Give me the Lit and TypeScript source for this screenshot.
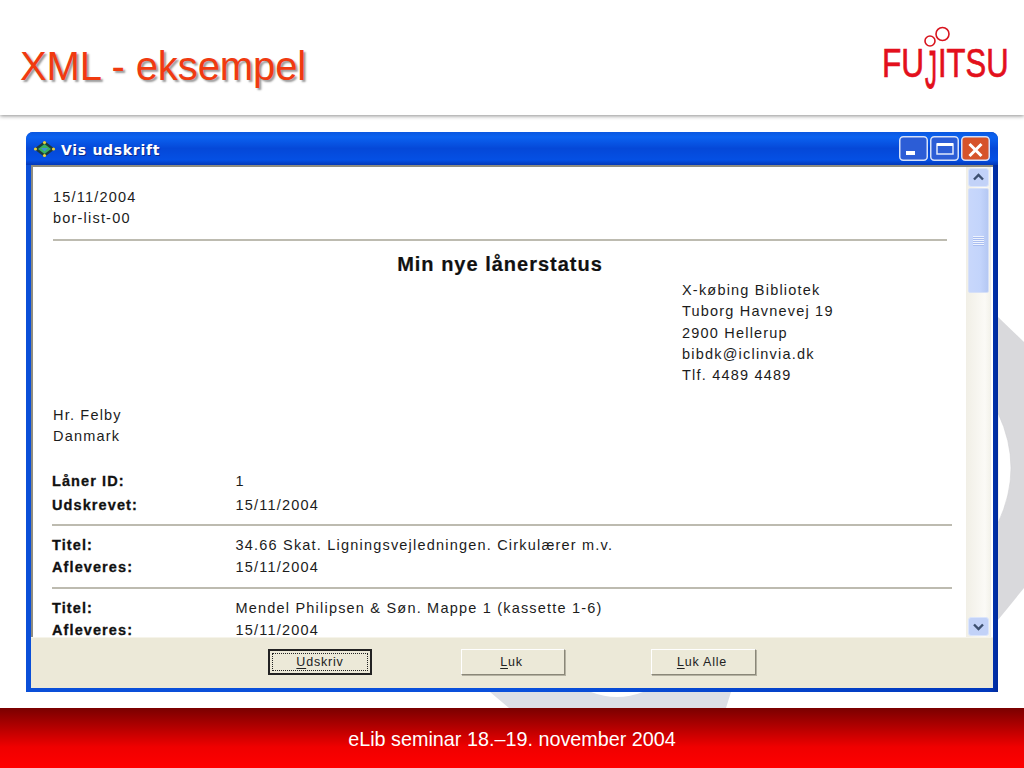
import { LitElement, html, css, svg } from "lit";
import { customElement } from "lit/decorators.js";

@customElement("app-root")
export class AppRoot extends LitElement {
  static styles = css`
    :host { display: block; width: 1024px; height: 768px; position: relative; overflow: hidden; background: #fff; font-family: "Liberation Sans", Arial, sans-serif; }
    .slide { display: flex; flex-direction: column; height: 768px; }
    .head { height: 115px; flex: none; display: flex; justify-content: space-between; align-items: flex-start; box-shadow: 0 1px 4px rgba(0,0,0,.45); background: #fff; position: relative; z-index: 2; }
    h1 { margin: 42px 0 0 20px; font-size: 40px; line-height: 48px; font-weight: 400; color: #f03a10; text-shadow: 2px 2px 2px #999; letter-spacing: -0.1px; }
    .logo { margin: 26px 13px 0 0; display: block; }
    .wm { position: absolute; left: 470px; top: 300px; z-index: 0; }
    .main { flex: 1; padding: 17px 26px 16px; position: relative; z-index: 1; min-height: 0; display: flex; }
    .win { flex: 1; display: flex; flex-direction: column; background: linear-gradient(90deg,#0a4fd8,#0a50dc 50%,#0038bc 99%,#002a9c); border-radius: 7px 7px 0 0; padding: 0 5px 4px; }
    .title { height: 33px; flex: none; display: flex; align-items: center; gap: 4px; margin: 0 -5px; padding: 0 8px 0 7px; border-radius: 7px 7px 0 0; background: linear-gradient(180deg,#0a57e0,#0b62f0 15%,#0548d8 50%,#0550e4 85%,#0338b8); color: #fff; }
    .tname { flex: 1; font-family: "DejaVu Sans", sans-serif; font-weight: 700; font-size: 14px; letter-spacing: .7px; text-shadow: 1px 1px 0 #0a2a8c; padding-top: 2px; }
    .ctl { display: flex; gap: 2px; }
    .ctl svg { display: block; }
    .client { flex: 1; display: flex; flex-direction: column; min-height: 0; background: #ece9d8; }
    .body { flex: 1; min-height: 0; display: flex; background: #fff; border-top: 2px solid #8e8c80; border-left: 2px solid #8e8c80; }
    .doc { flex: 1; overflow: hidden; padding: 19.5px 19px 0 20px; font-size: 14.5px; color: #1c1c1c; letter-spacing: 1.2px; min-width: 0; }
    .line { line-height: 21.3px; }
    .rule { height: 2px; background: #bdbbb0; }
    .r1 { margin: 10px 0; }
    .mt { text-align: center; font-weight: 700; font-size: 20px; line-height: 26px; color: #111; letter-spacing: 1px; -webkit-text-stroke: .2px #111; }
    .addr { margin: 3px 0 0 629px; }
    .cust { margin-top: 18.5px; }
    .rows { margin: 23px -5px 0 -1px; }
    .row { display: grid; grid-template-columns: 183.5px 1fr; line-height: 21.5px; height: 22px; }
    .row.first { height: 24px; }
    .row b { font-size: 14.5px; letter-spacing: 1.1px; color: #111; -webkit-text-stroke: .3px #111; }
    .sep { height: 2px; background: #bdbbb0; margin: 7.5px 0 9px; }
    .sb { width: 27px; flex: none; box-sizing: border-box; display: flex; flex-direction: column; background: linear-gradient(90deg,#f1efe6,#fbfaf6 70%,#f4f3ec 88%,#d9d9d5 89%,#fff 92%); padding: 1px 0 1px 2px; }
    .sb svg { display: block; }
    .thumb { width: 21px; box-sizing: border-box; height: 105px; margin-top: 1px; border: 1px solid #d6e0f7; border-radius: 2px; background: linear-gradient(90deg,#c8d7fb,#c3d4fb 60%,#b5c8f3); display: flex; align-items: center; justify-content: center; flex: none; }
    .grip { width: 11px; height: 10px; background: repeating-linear-gradient(180deg,#eef3fe 0 1px,#a9bdf0 1px 2px); }
    .track { flex: 1; }
    .btns { height: 51px; flex: none; display: grid; grid-template-columns: 237px 104px 89px 104px 86px 105px 1fr; padding-top: 11px; box-sizing: border-box; border-top: 1px solid #f6f4ea; }
    button { grid-row: 1; height: 26px; padding: 0 3px 0 0; margin: 0; font: 12.5px "Liberation Sans", Arial, sans-serif; letter-spacing: .8px; color: #222; background: #ece9d8; border: 1px solid; border-color: #fff #8a8778 #8a8778 #fff; box-shadow: 1px 1px 0 #b5b2a2; }
    button u { text-underline-offset: 2px; }
    .b1 { grid-column: 2; border: 2px solid #222; box-shadow: inset 0 0 0 1px #ece9d8; outline: 1px dotted #222; outline-offset: -5px; padding: 0; }
    .b2 { grid-column: 4; }
    .b3 { grid-column: 6; }
    .foot { height: 60px; flex: none; position: relative; z-index: 2; background: linear-gradient(180deg,#7a0000 0,#b00000 30%,#f00000 65%,#ff0000); color: #fff; display: flex; justify-content: center; align-items: flex-start; font-size: 19.8px; line-height: 22px; padding-top: 20px; box-sizing: border-box; }
  `;

  private logo() {
    const f = "Liberation Sans, Arial, sans-serif";
    return html`<svg class="logo" width="130" height="80" viewBox="-3 0 130 80">
      <g font-family="${f}" font-size="40" fill="#e3101c" stroke="#e3101c" stroke-width=".7">
        <text transform="translate(-2 51) scale(.79 1)">FU</text>
        <text transform="translate(41 62) scale(.6 1.36)">J</text>
        <text transform="translate(54 51) scale(.775 1)">ITSU</text>
      </g>
      <g fill="none" stroke="#d8141e" stroke-width="1.6">
        <circle cx="46" cy="15" r="5"/>
        <circle cx="58.5" cy="8" r="6.5"/>
      </g>
    </svg>`;
  }

  private watermark() {
    return html`<svg class="wm" width="554" height="408" viewBox="470 300 554 408">
      <path d="M998 317 L1024 342 V588 L998 620 Z" fill="#d9d9dc"/>
      <path d="M998 413 Q1024 468 998 523 Z" fill="#fff" stroke="#cfcfd2" stroke-width=".6"/>
      <path d="M490 692 L509 708 H726 L731 692 Z" fill="#dcdfe6"/>
      <path d="M591 692 Q617 702 643 692 Z" fill="#fff"/>
    </svg>`;
  }

  private icon() {
    return html`<svg width="24" height="18" viewBox="0 0 24 18">
      <path d="M11.5 1 L22 9 L11.5 17 L1 9 Z" fill="#1c3a3a"/>
      <path d="M11.5 4 L18 9 L11.5 14 L5 9 Z" fill="#36b060"/>
      <path d="M8 8 H15 L11.5 11.5 Z" fill="#3d8fd8"/>
      <circle cx="11.5" cy="2.5" r="1.6" fill="#e8d040"/><circle cx="11.5" cy="15.5" r="1.6" fill="#e8d040"/>
      <circle cx="2.5" cy="9" r="1.6" fill="#e8d040"/><circle cx="20.5" cy="9" r="1.6" fill="#e8d040"/>
    </svg>`;
  }

  private winBtn(kind: string) {
    const fill = kind === "x" ? "#d6532a" : "#2c5dd6";
    return html`<svg width="29" height="25" viewBox="0 0 29 25">
      <rect x=".75" y=".75" width="27.5" height="23.5" rx="3.5" fill="${fill}" stroke="#d5e0f8" stroke-width="1.5"/>
      ${kind === "min" ? svg`<rect x="7" y="15" width="9" height="4" fill="#fff"/>` : ""}
      ${kind === "max" ? svg`<rect x="7" y="8" width="16" height="10" fill="none" stroke="#dfe8fb" stroke-width="1.5"/><rect x="7" y="7" width="16" height="3" fill="#fff"/>` : ""}
      ${kind === "x" ? svg`<path d="M8.5 8 L20.5 20 M20.5 8 L8.5 20" stroke="#fff" stroke-width="3"/>` : ""}
    </svg>`;
  }

  private sbBtn(up: boolean) {
    return html`<svg width="21" height="19" viewBox="0 0 21 19">
      <rect x=".5" y=".5" width="20" height="18" rx="2.5" fill="#c2d2f8" stroke="#dbe5fb"/>
      <path d="${up ? "M6 11.5 L10.5 7 L15 11.5" : "M6 7.5 L10.5 12 L15 7.5"}" fill="none" stroke="#3d5070" stroke-width="2.4"/>
    </svg>`;
  }

  render() {
    return html`
      ${this.watermark()}
      <div class="slide">
        <header class="head"><h1>XML - eksempel</h1>${this.logo()}</header>
        <main class="main">
          <section class="win">
            <div class="title">${this.icon()}<span class="tname">Vis udskrift</span>
              <div class="ctl">${this.winBtn("min")}${this.winBtn("max")}${this.winBtn("x")}</div>
            </div>
            <div class="client">
              <div class="body">
                <div class="doc">
                  <div class="line">15/11/2004</div>
                  <div class="line">bor-list-00</div>
                  <div class="rule r1"></div>
                  <div class="mt">Min nye lånerstatus</div>
                  <div class="addr">
                    <div class="line">X-købing Bibliotek</div>
                    <div class="line">Tuborg Havnevej 19</div>
                    <div class="line">2900 Hellerup</div>
                    <div class="line">bibdk@iclinvia.dk</div>
                    <div class="line">Tlf. 4489 4489</div>
                  </div>
                  <div class="cust">
                    <div class="line">Hr. Felby</div>
                    <div class="line">Danmark</div>
                  </div>
                  <div class="rows">
                    <div class="row first"><b>Låner ID:</b><span>1</span></div>
                    <div class="row"><b>Udskrevet:</b><span>15/11/2004</span></div>
                    <div class="sep"></div>
                    <div class="row"><b>Titel:</b><span>34.66 Skat. Ligningsvejledningen. Cirkulærer m.v.</span></div>
                    <div class="row"><b>Afleveres:</b><span>15/11/2004</span></div>
                    <div class="sep"></div>
                    <div class="row"><b>Titel:</b><span>Mendel Philipsen &amp; Søn. Mappe 1 (kassette 1-6)</span></div>
                    <div class="row"><b>Afleveres:</b><span>15/11/2004</span></div>
                  </div>
                </div>
                <div class="sb">
                  ${this.sbBtn(true)}
                  <div class="thumb"><div class="grip"></div></div>
                  <div class="track"></div>
                  ${this.sbBtn(false)}
                </div>
              </div>
              <div class="btns">
                <button class="b1"><u>U</u>dskriv</button>
                <button class="b2"><u>L</u>uk</button>
                <button class="b3"><u>L</u>uk Alle</button>
              </div>
            </div>
          </section>
        </main>
        <footer class="foot">eLib seminar 18.–19. november 2004</footer>
      </div>
    `;
  }
}
